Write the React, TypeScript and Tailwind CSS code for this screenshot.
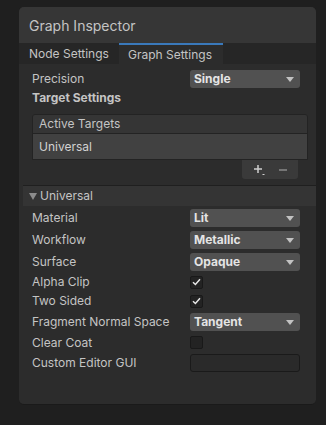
import React from 'react';

const font = { fontFamily: 'Inter, "Noto Sans", sans-serif' };

const Arrow = () => (
  <svg width="8" height="5" viewBox="0 0 8 5" className="shrink-0">
    <path d="M0 0 H8 L4 5 Z" fill="#c2c2c2" />
  </svg>
);

const Dropdown: React.FC<{ value: string }> = ({ value }) => (
  <div className="flex h-[18px] w-[110px] items-center justify-between rounded-[3px] bg-[#515151] pl-[4px] pr-[6px] text-[12px] font-bold text-[#e4e4e4]">
    <span>{value}</span>
    <Arrow />
  </div>
);

const Checkbox: React.FC<{ checked?: boolean }> = ({ checked }) => (
  <div className="flex h-[13px] w-[13px] items-center justify-center rounded-[2px] border border-[#191919] bg-[#232323]">
    {checked && (
      <svg width="9" height="8" viewBox="0 0 9 8">
        <path d="M1 4.2 L3.4 6.5 L8 1.2" fill="none" stroke="#e6e6e6" strokeWidth="1.5" />
      </svg>
    )}
  </div>
);

const Row: React.FC<{ label: string; h: string; children?: React.ReactNode }> = ({
  label,
  h,
  children,
}) => (
  <div className={`flex ${h} items-center`}>
    <span className="w-[158px] shrink-0 text-[12px] text-[#c4c4c4]">{label}</span>
    {children}
  </div>
);

export default function App() {
  return (
    <div className="min-h-[425px] bg-[#1f1f1f] pt-[7px] pl-[19px]" style={font}>
      <div className="flex h-[398px] w-[297px] flex-col overflow-hidden rounded-[5px] border-b border-[#1a1a1a] bg-[#2c2c2c]">
        {/* title */}
        <div className="flex h-[36px] items-center bg-[#363636] pl-[10px] text-[14px] text-[#c4c4c4]">
          Graph Inspector
        </div>

        {/* tabs */}
        <div className="flex h-[21px] bg-[#262626] text-[12px] text-[#c4c4c4]">
          <div className="flex w-[100px] items-center pl-[10px]">Node Settings</div>
          <div className="flex w-[104px] items-center border-t-2 border-[#3a79bb] bg-[#2c2c2c] pl-[9px]">
            Graph Settings
          </div>
        </div>

        {/* graph settings */}
        <div className="pl-[13px] pt-[6px]">
          <Row label="Precision" h="h-[18px]">
            <Dropdown value="Single" />
          </Row>
          <div className="mt-[1px] text-[12px] font-bold text-[#c4c4c4]">Target Settings</div>

          {/* active targets list */}
          <div className="mt-[7px] w-[276px]">
            <div className="overflow-hidden rounded-t-[3px] border border-[#232323]">
              <div className="flex h-[18px] items-center bg-[#353535] pl-[6px] text-[12px] text-[#c4c4c4]">
                Active Targets
              </div>
              <div className="flex h-[26px] items-center border-t border-[#232323] bg-[#414141] pl-[6px] text-[12px] text-[#d2d2d2]">
                Universal
              </div>
            </div>
            <div className="flex justify-end pr-[10px]">
              <div className="flex h-[19px] w-[56px] items-center justify-center gap-[12px] rounded-b-[3px] bg-[#3a3a3a]">
                <svg width="13" height="12" viewBox="0 0 13 12">
                  <path d="M5 1 V9 M1 5 H9" stroke="#cfcfcf" strokeWidth="1.5" />
                  <path d="M9.5 10.5 H11.5" stroke="#cfcfcf" strokeWidth="1.2" />
                </svg>
                <svg width="10" height="12" viewBox="0 0 10 12">
                  <path d="M1 6 H9" stroke="#8a8a8a" strokeWidth="1.3" />
                </svg>
              </div>
            </div>
          </div>
        </div>

        {/* universal foldout */}
        <div className="ml-[4px] mt-[6px] border-t border-[#1f1f1f]">
          <div className="flex h-[20px] items-center gap-[3px] bg-[#343434] pl-[6px] text-[12px] text-[#c4c4c4]">
            <svg width="8" height="7" viewBox="0 0 8 7">
              <path d="M0 0 H8 L4 7 Z" fill="#8c8c8c" />
            </svg>
            Universal
          </div>
        </div>

        <div className="pl-[13px] pt-[1px]">
          <Row label="Material" h="h-[22px]">
            <Dropdown value="Lit" />
          </Row>
          <Row label="Workflow" h="h-[22px]">
            <Dropdown value="Metallic" />
          </Row>
          <Row label="Surface" h="h-[22px]">
            <Dropdown value="Opaque" />
          </Row>
          <Row label="Alpha Clip" h="h-[18px]">
            <Checkbox checked />
          </Row>
          <Row label="Two Sided" h="h-[20px]">
            <Checkbox checked />
          </Row>
          <Row label="Fragment Normal Space" h="h-[22px]">
            <Dropdown value="Tangent" />
          </Row>
          <Row label="Clear Coat" h="h-[19px]">
            <Checkbox />
          </Row>
          <Row label="Custom Editor GUI" h="h-[22px]">
            <div className="h-[18px] w-[110px] rounded-[3px] border border-[#1a1a1a] bg-[#2a2a2a]" />
          </Row>
        </div>
      </div>
    </div>
  );
}
